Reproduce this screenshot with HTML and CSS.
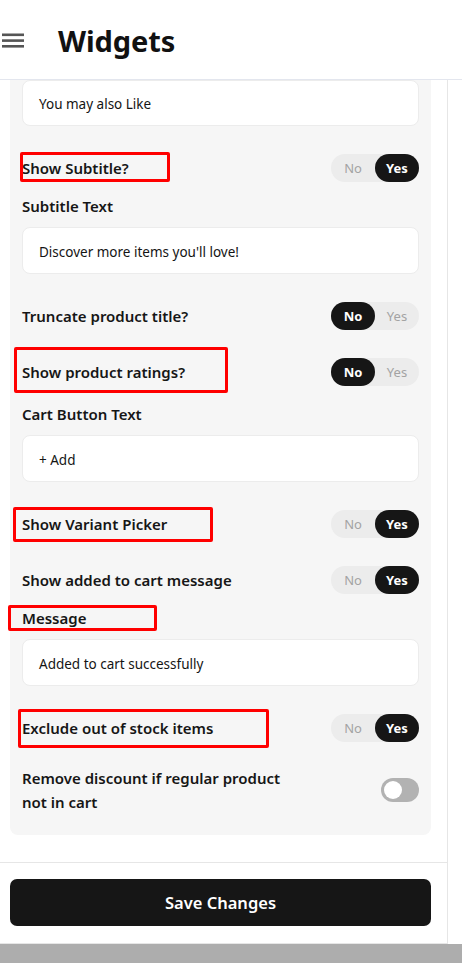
FILE: index.html
```html
<!DOCTYPE html>
<html lang="en">
<head>
<meta charset="utf-8">
<title>Widgets</title>
<link rel="stylesheet" href="styles.css">
</head>
<body>
<div class="app">
  <header class="topbar">
    <span class="menu-icon" aria-hidden="true"><svg width="22" height="15" viewBox="0 0 22 15"><rect x="0" y="0.5" width="22" height="2.6" fill="#555"/><rect x="0" y="6.3" width="22" height="2.6" fill="#555"/><rect x="0" y="12" width="22" height="2.6" fill="#555"/></svg></span>
    <h1 class="title">Widgets</h1>
  </header>
  <div class="body-wrap">
    <main class="content">
      <section class="panel">
        <div class="input first">You may also Like</div>

        <div class="setting">
          <div class="toggle-row">
            <span class="label">Show Subtitle?</span>
            <span class="seg"><span class="seg-opt">No</span><span class="seg-opt active">Yes</span></span>
          </div>
          <div class="field sub">
            <span class="label">Subtitle Text</span>
            <div class="input">Discover more items you'll love!</div>
          </div>
        </div>

        <div class="setting">
          <div class="toggle-row">
            <span class="label">Truncate product title?</span>
            <span class="seg"><span class="seg-opt active">No</span><span class="seg-opt">Yes</span></span>
          </div>
        </div>

        <div class="setting">
          <div class="toggle-row">
            <span class="label">Show product ratings?</span>
            <span class="seg"><span class="seg-opt active">No</span><span class="seg-opt">Yes</span></span>
          </div>
        </div>

        <div class="field standalone">
          <span class="label">Cart Button Text</span>
          <div class="input">+ Add</div>
        </div>

        <div class="setting">
          <div class="toggle-row">
            <span class="label">Show Variant Picker</span>
            <span class="seg"><span class="seg-opt">No</span><span class="seg-opt active">Yes</span></span>
          </div>
        </div>

        <div class="setting">
          <div class="toggle-row">
            <span class="label">Show added to cart message</span>
            <span class="seg"><span class="seg-opt">No</span><span class="seg-opt active">Yes</span></span>
          </div>
          <div class="field sub">
            <span class="label">Message</span>
            <div class="input">Added to cart successfully</div>
          </div>
        </div>

        <div class="setting">
          <div class="toggle-row">
            <span class="label">Exclude out of stock items</span>
            <span class="seg"><span class="seg-opt">No</span><span class="seg-opt active">Yes</span></span>
          </div>
        </div>

        <div class="setting multiline">
          <div class="toggle-row tall">
            <span class="label wrap">Remove discount if regular product not in cart</span>
            <span class="switch"><span class="knob"></span></span>
          </div>
        </div>
      </section>
    </main>
    <footer class="actions">
      <button class="save-btn" type="button">Save Changes</button>
    </footer>
  </div>
  <div class="bottom-bar"></div>

  <div class="mark m1"></div>
  <div class="mark m2"></div>
  <div class="mark m3"></div>
  <div class="mark m4"></div>
  <div class="mark m5"></div>
</div>
</body>
</html>
```
FILE: styles.css
```css
* { box-sizing: border-box; }
html, body { margin: 0; padding: 0; }
body {
  font-family: "Noto Sans", "Open Sans", "DejaVu Sans", sans-serif;
  color: #141414;
  background: #fff;
  width: 462px;
  height: 963px;
  overflow: hidden;
}
.app { position: relative; width: 462px; height: 963px; display: flex; flex-direction: column; }

.topbar {
  height: 80px;
  border-bottom: 1px solid #e3e6ee;
  display: flex;
  align-items: center;
  padding-left: 2px;
  flex-shrink: 0;
}
.menu-icon { display: flex; width: 22px; height: 15px; margin-top: 1px; }
.title {
  margin: 1px 0 0 34px;
  font-size: 29px;
  font-weight: 700;
  letter-spacing: -0.1px;
  color: #111;
  line-height: 1;
}

.body-wrap {
  width: 448px;
  border-right: 1px solid #e6e6e6;
  display: flex;
  flex-direction: column;
  height: 864px;
  flex-shrink: 0;
}
.content {
  height: 783px;
  border-bottom: 1px solid #e6e6e6;
  padding: 0 16px 0 10px;
}
.panel {
  background: #f6f6f6;
  border-radius: 0 0 8px 8px;
  padding: 0 12px 21px 12px;
  display: flex;
  flex-direction: column;
}
.input {
  height: 47px;
  background: #fff;
  border: 1px solid #ececec;
  border-radius: 8px;
  display: flex;
  align-items: center;
  padding: 2px 0 0 16px;
  font-size: 13.5px;
  color: #141414;
}
.input.first { height: 46px; }
.label {
  font-size: 15px;
  font-weight: 600;
  line-height: 20px;
  color: #161616;
}
.setting { margin-top: 28px; display: flex; flex-direction: column; }
.setting.multiline { margin-top: 24px; }
.field { display: flex; flex-direction: column; gap: 11px; }
.field.sub { margin-top: 14px; }
.field.standalone { margin-top: 18px; }

.toggle-row {
  height: 28px;
  display: flex;
  align-items: center;
  justify-content: space-between;
}
.toggle-row.tall { height: 48px; }
.label.wrap { width: 270px; line-height: 24px; }

.seg {
  display: flex;
  width: 88px;
  height: 28px;
  border-radius: 14px;
  background: #ececec;
}
.seg-opt {
  flex: 1;
  display: flex;
  align-items: center;
  justify-content: center;
  font-size: 13px;
  color: #a3a3a3;
  border-radius: 14px;
}
.seg-opt.active {
  background: #161616;
  color: #fff;
  font-weight: 700;
}

.switch {
  width: 38px;
  height: 24px;
  border-radius: 12px;
  background: #b2b2b2;
  display: flex;
  align-items: center;
  padding-left: 3px;
}
.knob { width: 18px; height: 18px; border-radius: 50%; background: #fff; }

.actions {
  height: 81px;
  border-bottom: 1px solid #e6e6e6;
  padding: 16px 16px 0 10px;
}
.save-btn {
  width: 421px;
  height: 47px;
  background: #161616;
  color: #fff;
  border: none;
  border-radius: 7px;
  font-family: inherit;
  font-size: 16.5px;
  font-weight: 600;
  cursor: pointer;
}
.bottom-bar { flex: 1; background: #adadad; }

.mark {
  position: absolute;
  border: 3px solid #f00;
  border-radius: 2px;
  pointer-events: none;
}
.m1 { left: 20px; top: 152px; width: 150px; height: 30px; }
.m2 { left: 14px; top: 347px; width: 214px; height: 46px; }
.m3 { left: 13px; top: 507px; width: 200px; height: 35px; }
.m4 { left: 8px; top: 605px; width: 149px; height: 26px; }
.m5 { left: 18px; top: 709px; width: 251px; height: 39px; }
```
